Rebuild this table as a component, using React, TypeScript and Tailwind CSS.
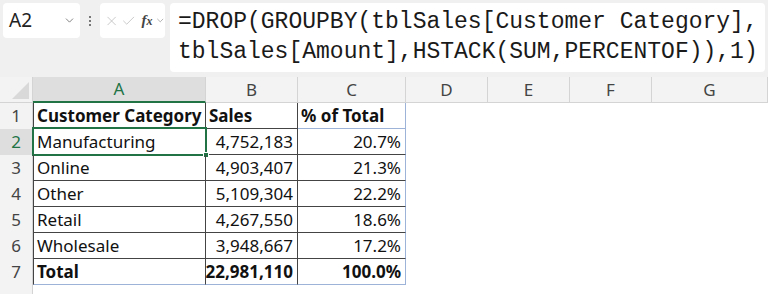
import { ChevronDown, X, Check } from 'lucide-react';

type Row = { n: number; cat: string; sales: string; pct: string; bold?: boolean };

const rows: Row[] = [
  { n: 2, cat: 'Manufacturing', sales: '4,752,183', pct: '20.7%' },
  { n: 3, cat: 'Online', sales: '4,903,407', pct: '21.3%' },
  { n: 4, cat: 'Other', sales: '5,109,304', pct: '22.2%' },
  { n: 5, cat: 'Retail', sales: '4,267,550', pct: '18.6%' },
  { n: 6, cat: 'Wholesale', sales: '3,948,667', pct: '17.2%' },
  { n: 7, cat: 'Total', sales: '22,981,110', pct: '100.0%', bold: true },
];

const cols = ['A', 'B', 'C', 'D', 'E', 'F', 'G'];

const cellFont = "font-['Noto_Sans',sans-serif] text-[17px] text-[#111] whitespace-nowrap";

export default function App() {
  return (
    <div className="w-[768px] h-[294px] overflow-hidden bg-[#f0f0f0] font-['Noto_Sans',sans-serif]">
      {/* Formula bar */}
      <div className="flex items-start gap-[5px] px-[3px] pt-[3px] h-[77px]">
        <div className="w-[77px] h-[35px] bg-white rounded-[4px] flex items-center pl-[6px] pr-[4px]">
          <span className="flex-1 text-[19px] text-[#222]">A2</span>
          <ChevronDown size={13} strokeWidth={1.5} className="text-[#666]" />
        </div>
        <div className="w-[10px] h-[35px] flex flex-col items-center justify-center gap-[2px]">
          <span className="w-[2px] h-[2px] bg-[#777]" />
          <span className="w-[2px] h-[2px] bg-[#777]" />
          <span className="w-[2px] h-[2px] bg-[#777]" />
        </div>
        <div className="w-[65px] h-[35px] bg-white rounded-[4px] flex items-center pl-[4px] gap-[2px]">
          <X size={16} strokeWidth={1.2} className="text-[#bbb]" />
          <Check size={16} strokeWidth={1.2} className="text-[#bbb]" />
          <span className="font-['Liberation_Serif',serif] italic font-bold text-[15px] text-[#444] leading-none ml-[3px]">
            f<span className="text-[12px]">x</span>
          </span>
          <ChevronDown size={11} strokeWidth={1.5} className="text-[#888]" />
        </div>
        <div className="flex-1 h-[69px] bg-white rounded-[4px] pl-[8px] pt-[4px] font-['Liberation_Mono',monospace] text-[23px] leading-[30px] text-[#1a1a1a] whitespace-pre">
          <div>=DROP(GROUPBY(tblSales[Customer Category],</div>
          <div>tblSales[Amount],HSTACK(SUM,PERCENTOF)),1)</div>
        </div>
      </div>

      {/* Grid */}
      <div className="grid grid-cols-[33px_173px_92px_108px_82px_82px_82px_1fr] bg-white">
        {/* header row */}
        <div className="h-[26px] bg-[#f3f3f3] border-r border-b border-[#d4d4d4] relative">
          <div className="absolute right-[3px] bottom-[3px] w-0 h-0 border-l-[17px] border-l-transparent border-b-[17px] border-b-[#d9d9d9]" />
        </div>
        {cols.map((c) => (
          <div
            key={c}
            className={
              c === 'A'
                ? 'h-[26px] bg-[#dedede] border-r border-[#d4d4d4] border-b-2 border-b-[#217346] flex items-center justify-center text-[17px] text-[#217346]'
                : 'h-[26px] bg-[#f3f3f3] border-r border-b border-[#d4d4d4] flex items-center justify-center text-[17px] text-[#444]'
            }
          >
            {c}
          </div>
        ))}

        {/* row 1 */}
        <div className="h-[26px] bg-[#f3f3f3] border-r border-[#d4d4d4] flex items-center justify-center text-[17px] text-[#444]">1</div>
        <div className={`h-[26px] border-l border-r border-b border-[#444] flex items-center pl-[3px] font-bold ${cellFont}`}>Customer Category</div>
        <div className={`h-[26px] border-r border-b border-[#444] flex items-center pl-[3px] font-bold ${cellFont}`}>Sales</div>
        <div className={`h-[26px] border-r border-b border-[#9db3d8] flex items-center pl-[3px] font-bold ${cellFont}`}>% of Total</div>
        <div className="h-[26px]" />
        <div className="h-[26px]" />
        <div className="h-[26px]" />
        <div className="h-[26px]" />

        {rows.map((r) => {
          const sel = r.n === 2;
          const last = r.n === 7;
          const bottom = last ? 'border-b-[#9db3d8]' : 'border-b-[#444]';
          return (
            <div key={r.n} className="contents">
              <div
                className={`h-[26px] border-r border-[#d4d4d4] flex items-center justify-center text-[17px] ${
                  sel ? 'bg-[#dedede] text-[#217346]' : 'bg-[#f3f3f3] text-[#444]'
                }`}
              >
                {r.n}
              </div>
              <div className={`relative h-[26px] border-l border-r border-b border-[#444] ${bottom} flex items-center pl-[3px] ${r.bold ? 'font-bold' : ''} ${cellFont}`}>
                {sel && (
                  <>
                    <div className="absolute -left-[2px] -top-[2px] -right-[2px] -bottom-[2px] border-2 border-[#217346]" />
                    <div className="absolute -right-[4px] -bottom-[4px] w-[6px] h-[6px] bg-[#217346] border border-white" />
                  </>
                )}
                {r.cat}
              </div>
              <div className={`h-[26px] border-r border-b border-[#444] ${bottom} flex items-center justify-end pr-[4px] ${r.bold ? 'font-bold' : ''} ${cellFont}`}>
                {r.sales}
              </div>
              <div className={`h-[26px] border-r border-b border-r-[#9db3d8] ${bottom} flex items-center justify-end pr-[4px] ${r.bold ? 'font-bold' : ''} ${cellFont}`}>
                {r.pct}
              </div>
              <div className="h-[26px]" />
              <div className="h-[26px]" />
              <div className="h-[26px]" />
              <div className="h-[26px]" />
            </div>
          );
        })}

        {/* row 8 partial */}
        <div className="h-[26px] bg-[#f3f3f3] border-r border-[#d4d4d4]" />
        <div className="h-[26px] col-span-7" />
      </div>
    </div>
  );
}
